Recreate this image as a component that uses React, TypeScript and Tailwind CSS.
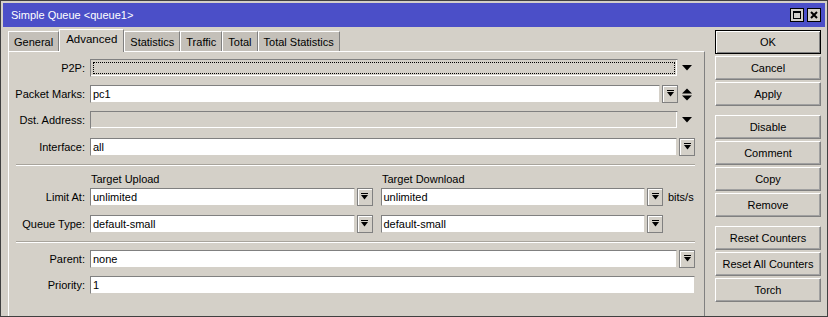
import React from "react";

const tabs = ["General", "Advanced", "Statistics", "Traffic", "Total", "Total Statistics"];

const sideButtons = [
  { label: "OK", primary: true },
  { label: "Cancel" },
  { label: "Apply", gapAfter: true },
  { label: "Disable" },
  { label: "Comment" },
  { label: "Copy" },
  { label: "Remove", gapAfter: true },
  { label: "Reset Counters" },
  { label: "Reset All Counters" },
  { label: "Torch" },
];

function DropButton() {
  return (
    <div className="ml-[2px] flex h-[18px] w-[16px] shrink-0 items-center justify-center border border-[#808080] bg-[#d4d0c8] shadow-[inset_1px_1px_0_#ffffff]">
      <svg width="9" height="8" viewBox="0 0 9 8">
        <rect x="1" y="0" width="7" height="1" fill="#000" />
        <path d="M1 2 H8 L4.5 6.5 Z" fill="#000" />
      </svg>
    </div>
  );
}

function Arrow() {
  return (
    <div className="flex h-[18px] w-[17px] shrink-0 items-center justify-center">
      <svg width="10" height="6" viewBox="0 0 10 6">
        <path d="M0 0 H10 L5 5.5 Z" fill="#000" />
      </svg>
    </div>
  );
}

function UpDown() {
  return (
    <div className="flex h-[18px] w-[17px] shrink-0 items-center justify-center">
      <svg width="10" height="13" viewBox="0 0 10 13">
        <path d="M0 5.5 H10 L5 0.5 Z" fill="#000" />
        <path d="M0 7.5 H10 L5 12.5 Z" fill="#000" />
      </svg>
    </div>
  );
}

function Field({ value, disabled, focused }: { value?: string; disabled?: boolean; focused?: boolean }) {
  return (
    <div
      className={`flex h-[18px] min-w-0 flex-1 items-center border border-[#808080] border-b-[#d4d0c8] border-r-[#d4d0c8] shadow-[inset_-1px_-1px_0_#ffffff] ${
        disabled ? "bg-[#d4d0c8]" : "bg-white"
      }`}
    >
      {focused ? (
        <div className="mx-[2px] h-[12px] w-full border border-dotted border-black" />
      ) : (
        <span className="pl-[2px] text-black">{value}</span>
      )}
    </div>
  );
}

function Row({ label, children, className = "" }: { label: string; children: React.ReactNode; className?: string }) {
  return (
    <div className={`flex h-[18px] items-center ${className}`}>
      <div className="w-[81px] shrink-0 pr-[5px] text-right text-black">{label}:</div>
      <div className="flex flex-1 items-center">{children}</div>
    </div>
  );
}

export default function App() {
  return (
    <div className="flex h-[317px] w-[828px] flex-col overflow-hidden border border-[#404040] bg-[#d4d0c8] font-['Liberation_Sans',Arial,sans-serif] text-[11px] leading-none">
      <div className="mx-[2px] mt-[2px] flex h-[24px] shrink-0 items-center justify-between bg-[#4b4fc8] pl-[8px] pr-[4px] text-white">
        <span>Simple Queue &lt;queue1&gt;</span>
        <div className="flex gap-[3px]">
          <div className="flex h-[14px] w-[14px] items-center justify-center border border-black bg-[#d4d0c8]">
            <div className="h-[8px] w-[8px] border border-t-2 border-black" />
          </div>
          <div className="flex h-[14px] w-[14px] items-center justify-center border border-black bg-[#d4d0c8]">
            <svg width="8" height="8" viewBox="0 0 8 8">
              <path d="M1 1 L7 7 M7 1 L1 7" stroke="#000" strokeWidth="2" />
            </svg>
          </div>
        </div>
      </div>

      <div className="flex flex-1">
        <div className="flex w-[704px] shrink-0 flex-col pl-[7px] pt-[2px]">
          <div className="flex h-[22px] items-end">
            {tabs.map((tab) => {
              const active = tab === "Advanced";
              return (
                <div
                  key={tab}
                  className={`flex items-center border-l border-r border-t border-l-white border-r-[#808080] border-t-white text-black ${
                    active
                      ? "relative -mb-px h-[23px] bg-[#d4d0c8] px-[6px] pb-[3px] text-[11.5px]"
                      : "h-[20px] bg-[#c4c0b9] px-[5px] pt-[1px]"
                  }`}
                >
                  {tab}
                </div>
              );
            })}
          </div>
          <div className="flex flex-1 flex-col border-l border-r border-t border-l-white border-r-[#808080] border-t-white pr-[9px] pt-[7px]">
            <Row label="P2P">
              <Field disabled focused />
              <Arrow />
            </Row>
            <Row label="Packet Marks" className="mt-[8px]">
              <Field value="pc1" />
              <DropButton />
              <UpDown />
            </Row>
            <Row label="Dst. Address" className="mt-[8px]">
              <Field disabled />
              <Arrow />
            </Row>
            <Row label="Interface" className="mt-[9px]">
              <Field value="all" />
              <DropButton />
            </Row>

            <div className="ml-[7px] mt-[8px] h-[2px] border-b border-t border-b-white border-t-[#a8a49c]" />

            <div className="mt-[6px] flex h-[14px] items-center pl-[82px] text-black">
              <div className="w-[291px]">Target Upload</div>
              <div>Target Download</div>
            </div>
            <Row label="Limit At" className="mt-[2px]">
              <Field value="unlimited" />
              <DropButton />
              <div className="w-[8px]" />
              <Field value="unlimited" />
              <DropButton />
              <div className="w-[32px] pl-[5px] text-black">bits/s</div>
            </Row>
            <Row label="Queue Type" className="mt-[9px]">
              <Field value="default-small" />
              <DropButton />
              <div className="w-[8px]" />
              <Field value="default-small" />
              <DropButton />
              <div className="w-[32px]" />
            </Row>

            <div className="ml-[7px] mt-[8px] h-[2px] border-b border-t border-b-white border-t-[#a8a49c]" />

            <Row label="Parent" className="mt-[7px]">
              <Field value="none" />
              <DropButton />
            </Row>
            <Row label="Priority" className="mt-[8px]">
              <Field value="1" />
            </Row>
          </div>
        </div>

        <div className="flex flex-1 flex-col pl-[10px] pr-[6px] pt-[3px]">
          {sideButtons.map((b) => (
            <div
              key={b.label}
              className={`flex h-[24px] items-center justify-center bg-[#d4d0c8] text-black ${
                b.primary
                  ? "border border-black shadow-[inset_1px_1px_0_#ffffff,inset_-1px_-1px_0_#808080]"
                  : "border border-[#808080] border-l-white border-t-white shadow-[inset_-1px_-1px_0_#a0a0a0]"
              } ${b.gapAfter ? "mb-[9px]" : "mb-[2px]"}`}
            >
              {b.label}
            </div>
          ))}
        </div>
      </div>
    </div>
  );
}
